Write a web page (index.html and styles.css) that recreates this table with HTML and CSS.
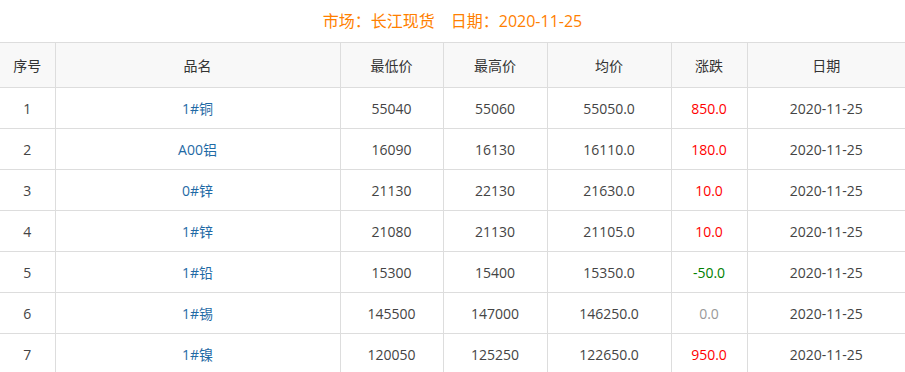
FILE: index.html
```html
<!DOCTYPE html>
<html lang="zh-CN">
<head>
<meta charset="utf-8">
<title>长江现货</title>
<link rel="stylesheet" href="styles.css">
</head>
<body>
<div class="title">市场：长江现货&emsp;日期：2020-11-25</div>
<table class="price-table">
  <colgroup>
    <col class="c-no"><col class="c-name"><col class="c-low"><col class="c-high"><col class="c-avg"><col class="c-chg"><col class="c-date">
  </colgroup>
  <thead>
    <tr><th>序号</th><th>品名</th><th>最低价</th><th>最高价</th><th>均价</th><th>涨跌</th><th>日期</th></tr>
  </thead>
  <tbody>
    <tr><td>1</td><td class="name">1#铜</td><td>55040</td><td>55060</td><td>55050.0</td><td class="up">850.0</td><td>2020-11-25</td></tr>
    <tr><td>2</td><td class="name">A00铝</td><td>16090</td><td>16130</td><td>16110.0</td><td class="up">180.0</td><td>2020-11-25</td></tr>
    <tr><td>3</td><td class="name">0#锌</td><td>21130</td><td>22130</td><td>21630.0</td><td class="up">10.0</td><td>2020-11-25</td></tr>
    <tr><td>4</td><td class="name">1#锌</td><td>21080</td><td>21130</td><td>21105.0</td><td class="up">10.0</td><td>2020-11-25</td></tr>
    <tr><td>5</td><td class="name">1#铅</td><td>15300</td><td>15400</td><td>15350.0</td><td class="down">-50.0</td><td>2020-11-25</td></tr>
    <tr><td>6</td><td class="name">1#锡</td><td>145500</td><td>147000</td><td>146250.0</td><td class="flat">0.0</td><td>2020-11-25</td></tr>
    <tr><td>7</td><td class="name">1#镍</td><td>120050</td><td>125250</td><td>122650.0</td><td class="up">950.0</td><td>2020-11-25</td></tr>
  </tbody>
</table>
</body>
</html>
```
FILE: styles.css
```css
html, body {
  margin: 0;
  padding: 0;
  background: #fff;
}
body {
  font-family: "Open Sans", "Noto Sans CJK SC", sans-serif;
  color: #333;
  font-size: 14px;
}
.title {
  height: 42px;
  line-height: 42px;
  text-align: center;
  font-size: 16px;
  color: #ff7f00;
}
.price-table {
  width: 905px;
  border-collapse: collapse;
  table-layout: fixed;
}
.c-no { width: 55px; }
.c-name { width: 285px; }
.c-low { width: 103px; }
.c-high { width: 104px; }
.c-avg { width: 124px; }
.c-chg { width: 76px; }
.c-date { width: 158px; }
.price-table th,
.price-table td {
  border: 1px solid #ddd;
  text-align: center;
  padding: 0;
  font-weight: normal;
}
.price-table th:first-child,
.price-table td:first-child { border-left: none; }
.price-table th:last-child,
.price-table td:last-child { border-right: none; }
.price-table th {
  height: 44px;
  background: #f8f8f8;
  color: #333;
}
.price-table td {
  height: 40px;
  color: #444;
}
.price-table td.name { color: #1f6aa5; }
.price-table td.up { color: #ff0000; }
.price-table td.down { color: #008000; }
.price-table td.flat { color: #999; }
```
